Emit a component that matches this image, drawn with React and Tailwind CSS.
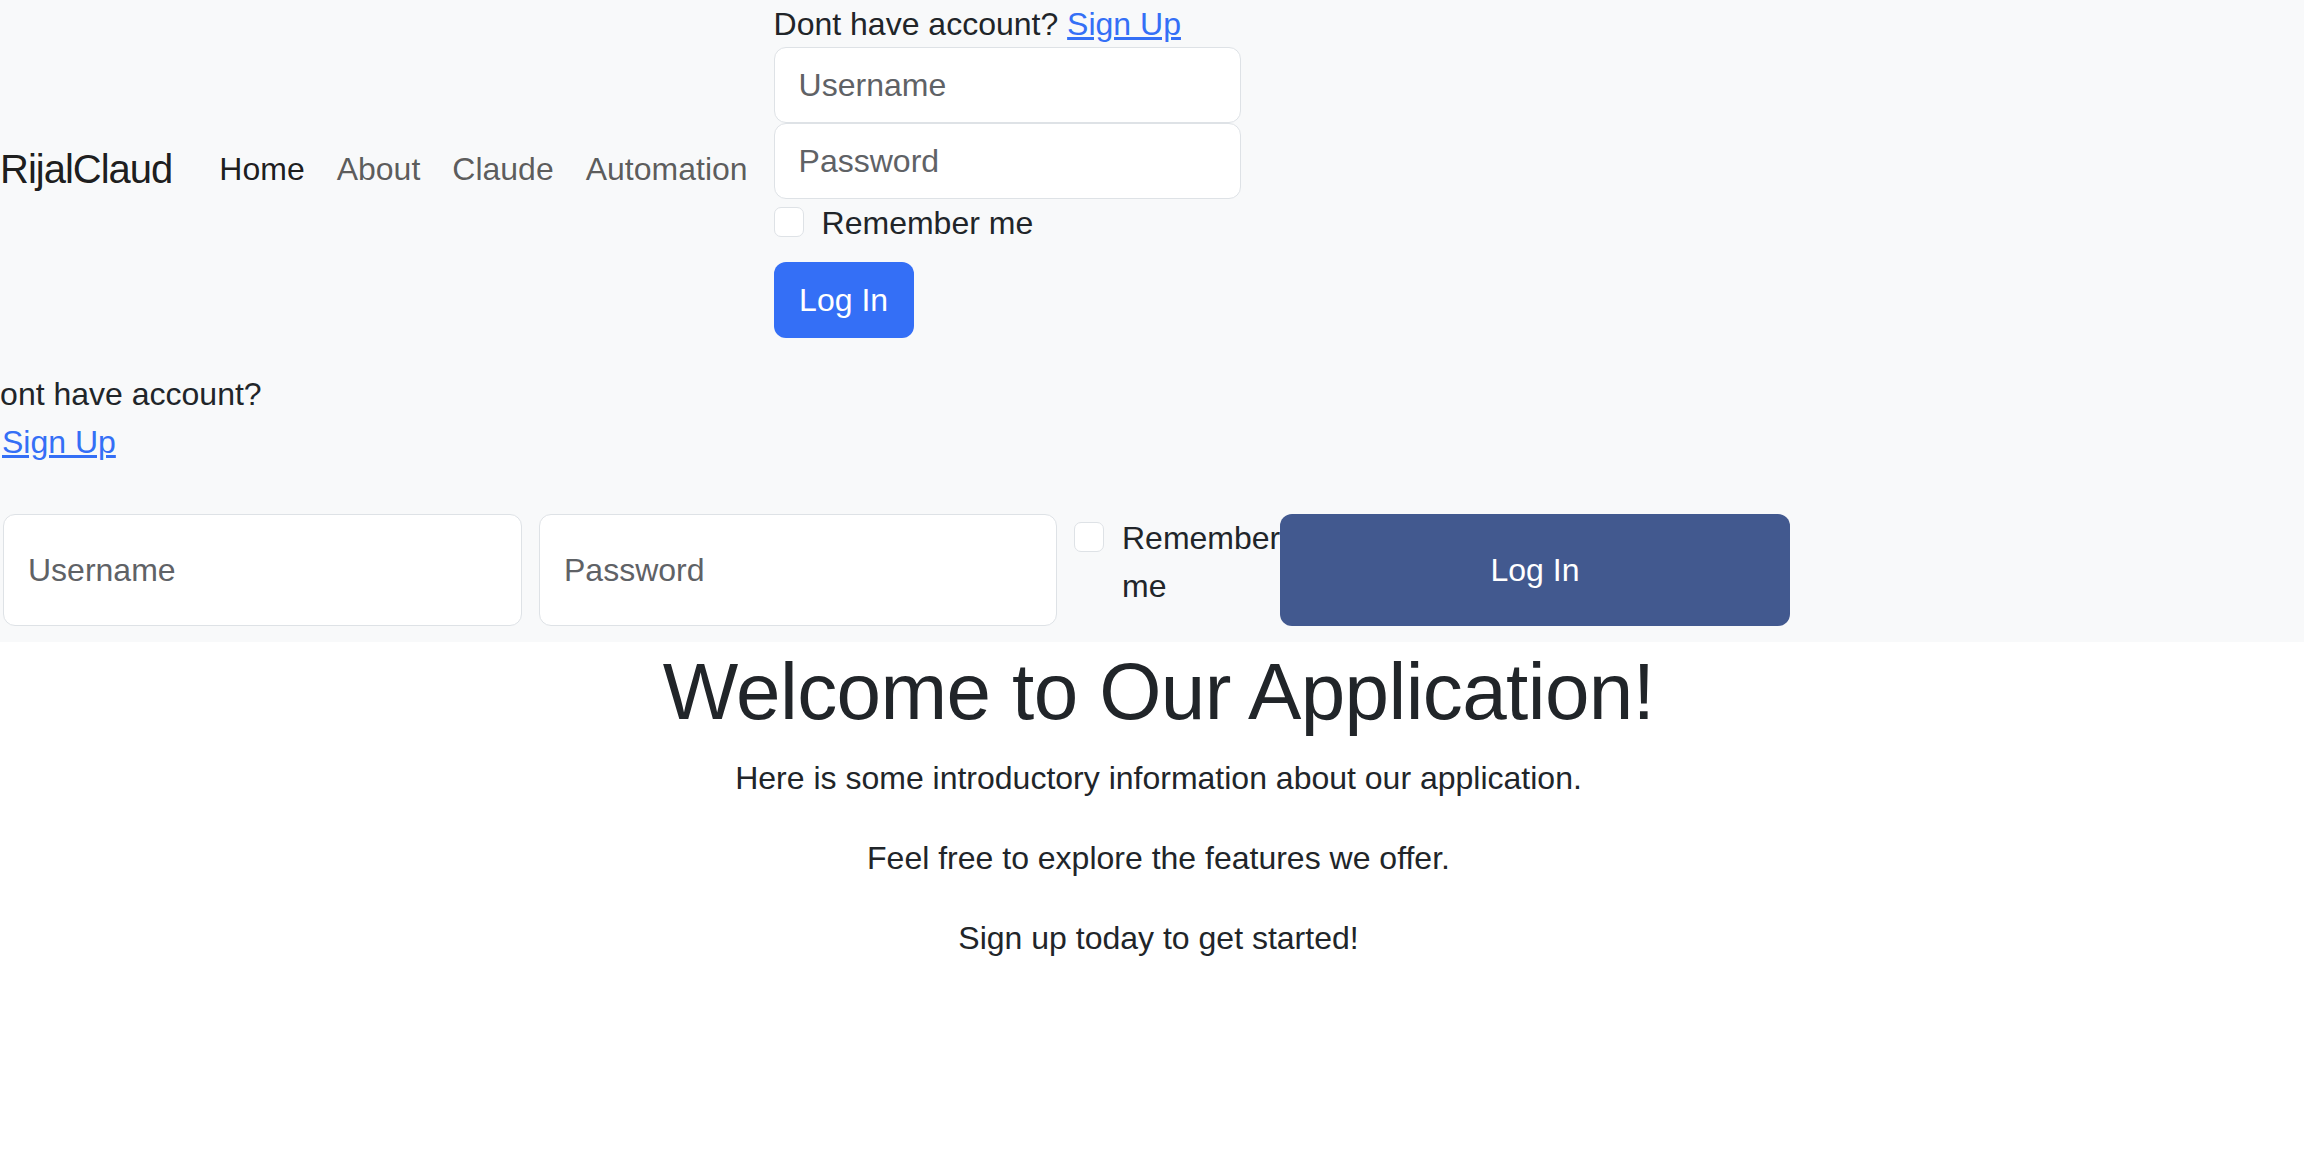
export default function App() {
  const navLinks = [
    { label: 'Home', active: true },
    { label: 'About' },
    { label: 'Claude' },
    { label: 'Automation' },
  ]

  return (
    <div className="min-h-[1150px] bg-white text-[#212529] font-['Liberation_Sans',Arial,sans-serif]">
      {/* Navbar */}
      <nav className="bg-[#f8f9fa] pb-[16px] overflow-hidden">
        <div className="flex items-center">
          <a href="#" className="shrink-0 mr-[31px] text-[40px] leading-[60px] tracking-[-1px] text-black/90">
            RijalClaud
          </a>
          <ul className="flex shrink-0">
            {navLinks.map((link) => (
              <li key={link.label}>
                <a
                  href="#"
                  className={`block px-[16px] text-[32px] leading-[48px] ${link.active ? 'text-black/90' : 'text-black/65'}`}
                >
                  {link.label}
                </a>
              </li>
            ))}
          </ul>

          {/* Login form in navbar */}
          <form className="ml-[10px] w-[467px] shrink-0 flex flex-col">
            <p className="text-[32px] leading-[48px] whitespace-nowrap">
              Dont have account?{' '}
              <a href="#" className="text-[#346ff6] underline">Sign Up</a>
            </p>
            <input
              type="text"
              placeholder="Username"
              className="mt-[-1px] h-[76px] w-full bg-white border border-[#dee2e6] rounded-[12px] px-[24px] text-[32px] placeholder:text-[#5f6266] outline-none"
            />
            <input
              type="password"
              placeholder="Password"
              className="h-[76px] w-full bg-white border border-[#dee2e6] rounded-[12px] px-[24px] text-[32px] placeholder:text-[#5f6266] outline-none"
            />
            <label className="flex items-start h-[48px] text-[32px] leading-[48px]">
              <input
                type="checkbox"
                className="appearance-none mt-[8px] w-[30px] h-[30px] shrink-0 bg-white border border-[#dee2e6] rounded-[7px]"
              />
              <span className="ml-[18px]">Remember me</span>
            </label>
            <button
              type="button"
              className="mt-[15px] w-[140px] h-[76px] rounded-[12px] bg-[#346ff6] text-white text-[32px]"
            >
              Log In
            </button>
          </form>
        </div>

        {/* Second login block */}
        <div className="mt-[32px]">
          <div className="text-[32px] leading-[48px]">
            <div className="ml-[-23px] whitespace-nowrap">Dont have account?</div>
            <div className="ml-[2px]">
              <a href="#" className="text-[#346ff6] underline">Sign Up</a>
            </div>
          </div>

          <form className="mt-[48px] ml-[3px] flex h-[112px] gap-[17px]">
            <input
              type="text"
              placeholder="Username"
              className="w-[519px] h-full bg-white border border-[#dee2e6] rounded-[12px] px-[24px] text-[32px] placeholder:text-[#5f6266] outline-none"
            />
            <input
              type="password"
              placeholder="Password"
              className="w-[518px] h-full bg-white border border-[#dee2e6] rounded-[12px] px-[24px] text-[32px] placeholder:text-[#5f6266] outline-none"
            />
            <label className="w-[189px] shrink-0 flex items-start text-[32px] leading-[48px]">
              <input
                type="checkbox"
                className="appearance-none mt-[8px] w-[30px] h-[30px] shrink-0 bg-white border border-[#dee2e6] rounded-[7px]"
              />
              <span className="ml-[18px] w-[141px]">Remember me</span>
            </label>
            <button
              type="button"
              className="w-[510px] h-full shrink-0 rounded-[12px] bg-[#42598f] text-white text-[32px]"
            >
              Log In
            </button>
          </form>
        </div>
      </nav>

      {/* Welcome */}
      <main className="text-center pl-[13px] pt-[2px]">
        <h1 className="text-[80px] leading-[96px] tracking-[-0.6px] font-medium mb-[14px]">
          Welcome to Our Application!
        </h1>
        <p className="text-[32px] leading-[48px] mb-[32px]">
          Here is some introductory information about our application.
        </p>
        <p className="text-[32px] leading-[48px] mb-[32px]">
          Feel free to explore the features we offer.
        </p>
        <p className="text-[32px] leading-[48px] mb-[32px]">
          Sign up today to get started!
        </p>
      </main>
    </div>
  )
}
